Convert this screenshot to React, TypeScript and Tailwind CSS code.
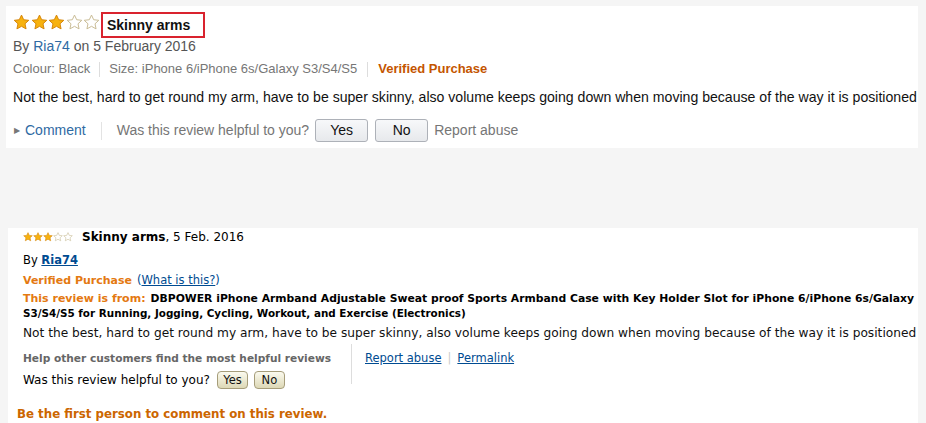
import React from "react";

const STAR = "M12 1.5l3.1 6.6 7.2.8-5.35 4.95 1.5 7.15L12 17.4l-6.45 3.6 1.5-7.15L1.7 8.9l7.2-.8z";

function Stars({ n, size, gap }: { n: number; size: number; gap: number }) {
  return (
    <div className="flex" style={{ gap }}>
      {[0, 1, 2, 3, 4].map((i) => (
        <svg key={i} width={size} height={size} viewBox="0 0 24 24">
          <path
            d={STAR}
            fill={i < n ? "#f7b20f" : "#ffffff"}
            stroke={i < n ? "#d6860a" : "#c8bb95"}
            strokeWidth={1.4}
            strokeLinejoin="round"
          />
        </svg>
      ))}
    </div>
  );
}

export default function App() {
  return (
    <div className="min-h-screen w-[926px] bg-[#f5f5f5] pt-[6px] overflow-hidden">
      {/* Top panel (new style) */}
      <div className="ml-[6px] w-[912px] h-[142px] bg-white pl-[7px] pt-[6px] font-['Liberation_Sans',Arial,sans-serif]">
        <div className="flex items-start h-[26px]">
          <div className="mt-[2px]">
            <Stars n={3} size={17} gap={0.5} />
          </div>
          <div className="ml-[1px] w-[104px] h-[26px] border-2 border-[#d9232e] pl-[4px] text-[14px] font-bold leading-[22px] text-[#111]">
            Skinny arms
          </div>
        </div>
        <div className="text-[14px] leading-[16px] text-[#555]">
          By <span className="text-[#2f6aa3]">Ria74</span> on 5 February 2016
        </div>
        <div className="mt-[5px] flex items-center text-[13px] leading-[20px] text-[#767676]">
          <span>Colour: Black</span>
          <span className="mx-[9px] h-[15px] w-px bg-[#ddd]" />
          <span>Size: iPhone 6/iPhone 6s/Galaxy S3/S4/S5</span>
          <span className="mx-[10px] h-[15px] w-px bg-[#ddd]" />
          <span className="font-bold text-[#c45500]">Verified Purchase</span>
        </div>
        <div className="mt-[8px] text-[14.1px] leading-[20px] text-[#111] whitespace-nowrap">
          Not the best, hard to get round my arm, have to be super skinny, also volume keeps going down when moving because of the way it is positioned
        </div>
        <div className="mt-[12px] flex items-center h-[23px] text-[14px]">
          <span className="ml-[1px] text-[8px] text-[#777]">&#9654;</span>
          <span className="ml-[5px] text-[#2f6aa3]">Comment</span>
          <span className="mx-[15px] h-[18px] w-px bg-[#e3e3e3]" />
          <span className="text-[#767676]">Was this review helpful to you?</span>
          <button className="ml-[6px] w-[53px] h-[23px] rounded-[3px] border border-[#adb1b8] bg-gradient-to-b from-[#f7f8fa] to-[#e7e9ec] text-[14px] text-[#111]">
            Yes
          </button>
          <button className="ml-[7px] w-[53px] h-[23px] rounded-[3px] border border-[#adb1b8] bg-gradient-to-b from-[#f7f8fa] to-[#e7e9ec] text-[14px] text-[#111]">
            No
          </button>
          <span className="ml-[6px] text-[#767676]">Report abuse</span>
        </div>
      </div>

      {/* Bottom panel (old style) */}
      <div className="ml-[8px] mt-[80px] w-[910px] h-[200px] bg-white pl-[15px] pt-[2px] font-['DejaVu_Sans',Verdana,sans-serif] text-[#000]">
        <div className="flex items-center h-[14px]">
          <Stars n={3} size={10} gap={0} />
          <span className="ml-[9px] text-[12px] font-bold">Skinny arms</span>
          <span className="text-[12px]">, 5 Feb. 2016</span>
        </div>
        <div className="mt-[8px] text-[11.5px] leading-[16px]">
          By <span className="font-bold text-[#004b91] underline">Ria74</span>
        </div>
        <div className="mt-[4px] flex items-baseline text-[11.5px] leading-[16px]">
          <span className="font-bold text-[11px] text-[#e47911]">Verified Purchase</span>
          <span className="ml-[5px] text-[#004b91]">
            (<span className="underline">What is this?</span>)
          </span>
        </div>
        <div className="mt-[2px] text-[11px] leading-[15px] font-bold whitespace-nowrap">
          <div className="flex items-baseline h-[15px]">
            <span className="text-[#e47911]">This review is from:</span>
            <span className="ml-[5px] text-[10.8px]">DBPOWER iPhone Armband Adjustable Sweat proof Sports Armband Case with Key Holder Slot for iPhone 6/iPhone 6s/Galaxy</span>
          </div>
          <div className="h-[15px] text-[10.4px]">
            S3/S4/S5 for Running, Jogging, Cycling, Workout, and Exercise (Electronics)
          </div>
        </div>
        <div className="mt-[4px] text-[12.2px] leading-[16px] whitespace-nowrap text-[#111]">
          Not the best, hard to get round my arm, have to be super skinny, also volume keeps going down when moving because of the way it is positioned
        </div>
        <div className="mt-[10px] flex">
          <div className="w-[328px]">
            <div className="text-[10.6px] leading-[15px] font-bold text-[#666] whitespace-nowrap">
              Help other customers find the most helpful reviews
            </div>
            <div className="mt-[5px] flex items-center text-[12px] whitespace-nowrap">
              <span>Was this review helpful to you?</span>
              <button className="ml-[7px] w-[31px] h-[18px] rounded-[4px] border border-[#a69d7a] bg-gradient-to-b from-[#fbfaef] to-[#ddd8b6] text-[11.5px] leading-[14px] text-[#111]">
                Yes
              </button>
              <button className="ml-[6px] w-[31px] h-[18px] rounded-[4px] border border-[#a69d7a] bg-gradient-to-b from-[#fbfaef] to-[#ddd8b6] text-[11.5px] leading-[14px] text-[#111]">
                No
              </button>
            </div>
          </div>
          <div className="w-px h-[40px] -mt-[7px] bg-[#ddd]" />
          <div className="ml-[13px] text-[11.5px] leading-[15px] text-[#004b91] whitespace-nowrap">
            <span className="underline">Report abuse</span>
            <span className="mx-[6px] text-[#ccc]">|</span>
            <span className="underline">Permalink</span>
          </div>
        </div>
        <div className="mt-[18px] text-[11.8px] leading-[15px] font-bold text-[#cc6600] -ml-[6px]">
          Be the first person to comment on this review.
        </div>
      </div>
    </div>
  );
}
